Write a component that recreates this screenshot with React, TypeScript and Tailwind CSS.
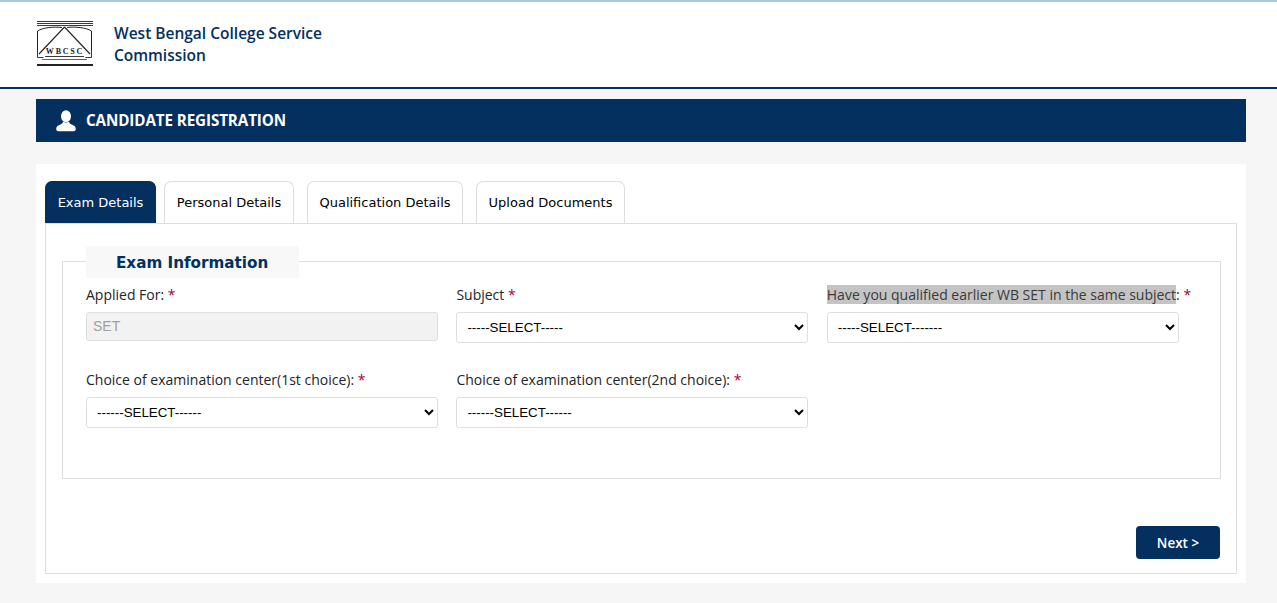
function Logo() {
  return (
    <svg width="60" height="50" viewBox="0 0 60 50" fill="none" stroke="#222" className="block">
      <path d="M1 1.500h56M1 3.500h56M1 5.500h56" strokeWidth="0.9" />
      <path d="M26 7.500C18 6.500 7 7.500 1.500 11V30M31 7.500C39 6.500 50 7.500 55.500 11V30" strokeWidth="1" />
      <path d="M28.500 7L3 34M28.500 7L54 34" strokeWidth="1.100" />
      <path d="M1.500 30v7.500h6M55.500 30v7.500h-6" strokeWidth="0.9" />
      <path d="M9 36.500h39" strokeWidth="0.9" />
      <path d="M6 39.500h45" strokeWidth="0.7" />
      <path d="M1 45h56" strokeWidth="1.800" />
      <text x="29" y="33.500" textAnchor="middle" stroke="none" fill="#222" fontFamily="'Liberation Serif', serif" fontSize="8" fontWeight="700" letterSpacing="1.800">WBCSC</text>
    </svg>
  )
}

function UserIcon() {
  return (
    <svg width="20" height="22" viewBox="0 0 20 22" fill="#fff" className="block">
      <ellipse cx="10" cy="6.200" rx="5" ry="6" />
      <path d="M7 11.500c-.2 1.600-1 2.400-2.600 3C2 15.400.3 16.300.2 19c0 1.300.8 2.200 2 2.200h15.600c1.200 0 2-.9 2-2.200-.1-2.700-1.800-3.600-4.200-4.500-1.600-.6-2.400-1.400-2.600-3-1.700 1.400-4.300 1.400-6 0z" />
    </svg>
  )
}

function Req() {
  return <span className="text-[#a3003d]">*</span>
}

const tabs = [
  { name: "Exam Details", width: "w-[111px]" },
  { name: "Personal Details", width: "w-[130px]" },
  { name: "Qualification Details", width: "w-[156px]" },
  { name: "Upload Documents", width: "w-[149px]" },
]

const labelClass = "block h-[20px] mb-[7px] whitespace-nowrap text-[14px] leading-[20px] text-[#212529] font-['Open_Sans',sans-serif]"
const selectClass = "block w-full h-[31px] pl-[6px] pr-[4px] bg-white border border-[#dedede] rounded-[3px] text-[13.333px] text-black font-['Liberation_Sans',sans-serif]"

function SelectField({ label, option }: { label: React.ReactNode; option: string }) {
  return (
    <div>
      <label className={labelClass}>{label}</label>
      <select className={selectClass}>
        <option>{option}</option>
      </select>
    </div>
  )
}

export default function App() {
  return (
    <div className="min-h-[603px] bg-[#f6f6f6] font-['Open_Sans',sans-serif]">
      <header className="h-[89px] bg-white border-t-2 border-b-2 border-t-[#a3cdd3] border-b-[#03305f] flex items-center pl-[36px]">
        <Logo />
        <div className="ml-[18px] -mt-[2px] text-[15.500px] leading-[22px] font-semibold text-[#03305f] w-[240px]">
          West Bengal College Service Commission
        </div>
      </header>

      <div className="ml-[36px] mr-[31px] mt-[10px] h-[43px] bg-[#03305f] flex items-center pl-[20px] text-white">
        <UserIcon />
        <h1 className="ml-[10px] text-[15.200px] font-bold tracking-[-0.1px]">CANDIDATE REGISTRATION</h1>
      </div>

      <main className="ml-[36px] mr-[31px] mt-[22px] h-[419px] bg-white pt-[17px] px-[9px]">
        <div className="flex h-[42px] gap-[13px] font-['DejaVu_Sans',sans-serif] text-[13px]">
          {tabs.map((tab, i) => (
            <div
              key={tab.name}
              className={`${tab.width} flex items-center justify-center rounded-t-[7px] border border-b-0 ${
                i === 0 ? "bg-[#03305f] border-[#03305f] text-white -mr-[5px]" : "bg-white border-[#dedede] text-black"
              }`}
            >
              {tab.name}
            </div>
          ))}
        </div>

        <div className="h-[351px] border border-[#dedede] pl-[16px] pr-[15px] pt-[22px]">
          <fieldset className="h-[233px] border border-[#dedede] pl-[23px]">
            <legend className="w-[213px] h-[30px] shadow-[0_2px_0_#f8f8f8] bg-[#f8f8f8] rounded-t-[3px] pl-[30px] font-['DejaVu_Sans',sans-serif] text-[15.200px] font-bold leading-[34px] text-[#03305f]">
              Exam Information
            </legend>
            <div className="grid grid-cols-[352px_352px_352px] gap-x-[18.400px] gap-y-[27px] mt-[9px]">
              <div>
                <label className={labelClass}>
                  Applied For: <Req />
                </label>
                <input
                  disabled
                  value="SET"
                  className="block w-full h-[29px] px-[6px] pb-[2px] bg-[#f2f2f2] border border-[#dedede] rounded-[3px] text-[14px] text-[#a0a0a0] font-['Liberation_Sans',sans-serif]"
                />
              </div>
              <SelectField label={<>Subject <Req /></>} option="-----SELECT-----" />
              <SelectField
                label={<><span className="bg-[#c4c4c4] text-[#3a3a3a]">Have you qualified earlier WB SET in the same subject</span>: <Req /></>}
                option="-----SELECT-------"
              />
              <SelectField label={<>Choice of examination center(1st choice): <Req /></>} option="------SELECT------" />
              <SelectField label={<>Choice of examination center(2nd choice): <Req /></>} option="------SELECT------" />
            </div>
          </fieldset>
          <div className="flex justify-end mt-[47px] mr-[1px]">
            <button className="w-[84px] h-[33px] pt-[1px] bg-[#03305f] rounded-[4px] text-white text-[13.500px] font-semibold">
              Next &gt;
            </button>
          </div>
        </div>
      </main>
    </div>
  )
}
